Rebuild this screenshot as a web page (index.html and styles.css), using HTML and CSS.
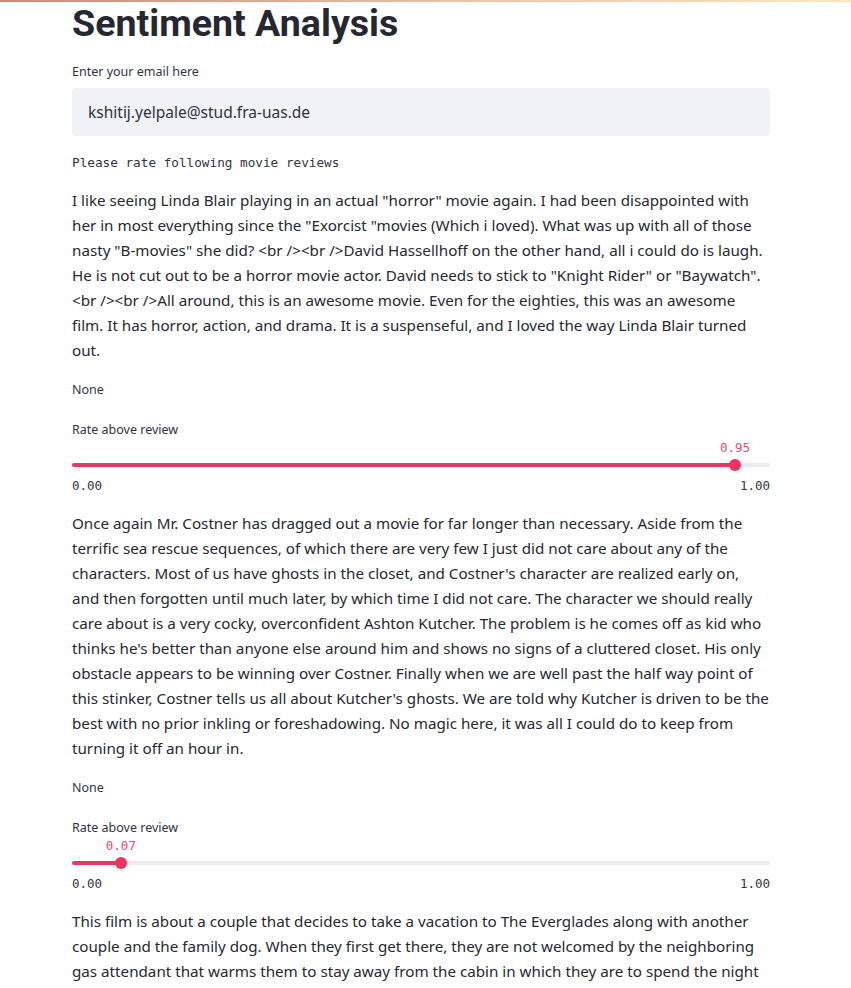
FILE: index.html
```html
<!DOCTYPE html>
<html>
<head>
<meta charset="utf-8">
<link rel="stylesheet" href="styles.css">
</head>
<body>
<div class="topbar"></div>
<main class="main">
  <h1 class="title">Sentiment Analysis</h1>
  <div class="field">
    <label class="label">Enter your email here</label>
    <div class="input">kshitij.yelpale@stud.fra-uas.de</div>
  </div>
  <div class="mono-text">Please rate following movie reviews</div>

  <p class="review">I like seeing Linda Blair playing in an actual "horror" movie again. I had been disappointed with her in most everything since the "Exorcist "movies (Which i loved). What was up with all of those nasty "B-movies" she did? &lt;br /&gt;&lt;br /&gt;David Hassellhoff on the other hand, all i could do is laugh. He is not cut out to be a horror movie actor. David needs to stick to "Knight Rider" or "Baywatch". &lt;br /&gt;&lt;br /&gt;All around, this is an awesome movie. Even for the eighties, this was an awesome film. It has horror, action, and drama. It is a suspenseful, and I loved the way Linda Blair turned out.</p>
  <div class="none">None</div>
  <div class="slider">
    <div class="label">Rate above review</div>
    <div class="track-wrap">
      <div class="track"><div class="fill" style="width:95%"></div></div>
      <div class="thumb" style="left:95%"><span class="thumb-value">0.95</span></div>
    </div>
    <div class="ticks"><span>0.00</span><span>1.00</span></div>
  </div>

  <p class="review">Once again Mr. Costner has dragged out a movie for far longer than necessary. Aside from the terrific sea rescue sequences, of which there are very few I just did not care about any of the characters. Most of us have ghosts in the closet, and Costner's character are realized early on, and then forgotten until much later, by which time I did not care. The character we should really care about is a very cocky, overconfident Ashton Kutcher. The problem is he comes off as kid who thinks he's better than anyone else around him and shows no signs of a cluttered closet. His only obstacle appears to be winning over Costner. Finally when we are well past the half way point of this stinker, Costner tells us all about Kutcher's ghosts. We are told why Kutcher is driven to be the best with no prior inkling or foreshadowing. No magic here, it was all I could do to keep from turning it off an hour in.</p>
  <div class="none">None</div>
  <div class="slider">
    <div class="label">Rate above review</div>
    <div class="track-wrap">
      <div class="track"><div class="fill" style="width:7%"></div></div>
      <div class="thumb" style="left:7%"><span class="thumb-value">0.07</span></div>
    </div>
    <div class="ticks"><span>0.00</span><span>1.00</span></div>
  </div>

  <p class="review">This film is about a couple that decides to take a vacation to The Everglades along with another couple and the family dog. When they first get there, they are not welcomed by the neighboring gas attendant that warms them to stay away from the cabin in which they are to spend the night and as they settle in, strange things begin to happen around them.</p>
</main>
</body>
</html>
```
FILE: styles.css
```css
html, body {
  margin: 0;
  padding: 0;
  background: #ffffff;
  overflow: hidden;
}
body {
  font-family: "Noto Sans", "Open Sans", sans-serif;
  color: rgb(38, 39, 48);
}
.topbar {
  height: 2px;
  background: linear-gradient(90deg, rgb(220, 130, 120), rgb(240, 200, 170) 60%, rgb(250, 230, 190));
}
.main {
  width: 698px;
  margin-left: 72px;
  margin-top: -4px;
}
.title {
  font-family: Roboto, "Open Sans", sans-serif;
  font-weight: 700;
  font-size: 37.6px;
  line-height: 50px;
  margin: 0 0 15px 0;
  color: rgb(38, 39, 48);
}
.label {
  display: block;
  font-size: 12.5px;
  line-height: 18px;
  color: rgb(49, 51, 63);
}
.field .label {
  margin-bottom: 7px;
}
.input {
  height: 48px;
  box-sizing: border-box;
  background: rgb(240, 242, 246);
  border-radius: 4px;
  padding: 0 16px;
  display: flex;
  align-items: center;
  font-size: 15.5px;
  color: rgb(49, 51, 63);
}
.mono-text {
  font-family: "DejaVu Sans Mono", monospace;
  font-size: 12.7px;
  line-height: 18px;
  margin-top: 18px;
  color: rgb(49, 51, 63);
}
.review {
  font-size: 15.2px;
  line-height: 25px;
  margin: 16px 0 0 0;
}
.review + .none {
  margin-top: 18px;
}
.none {
  font-size: 12.5px;
  line-height: 18px;
  color: rgb(49, 51, 63);
}
.slider {
  margin-top: 22px;
}
.slider + .review {
  margin-top: 16px;
}
.track-wrap {
  position: relative;
  height: 34px;
}
.track {
  position: absolute;
  left: 0;
  right: 0;
  top: 24px;
  height: 4px;
  border-radius: 2px;
  background: rgb(234, 234, 240);
}
.fill {
  height: 100%;
  border-radius: 2px;
  background: rgb(229, 57, 101);
}
.thumb {
  position: absolute;
  top: 20px;
  width: 12px;
  height: 12px;
  margin-left: -6px;
  border-radius: 50%;
  background: rgb(240, 50, 95);
}
.thumb-value {
  position: absolute;
  bottom: 15px;
  left: 50%;
  transform: translateX(-50%);
  font-family: "DejaVu Sans Mono", monospace;
  font-size: 12.5px;
  line-height: 16px;
  color: rgb(232, 72, 120);
  white-space: nowrap;
}
.ticks {
  display: flex;
  justify-content: space-between;
  font-family: "DejaVu Sans Mono", monospace;
  font-size: 12.5px;
  line-height: 18px;
  color: rgb(49, 51, 63);
  margin-top: 4px;
}
```
